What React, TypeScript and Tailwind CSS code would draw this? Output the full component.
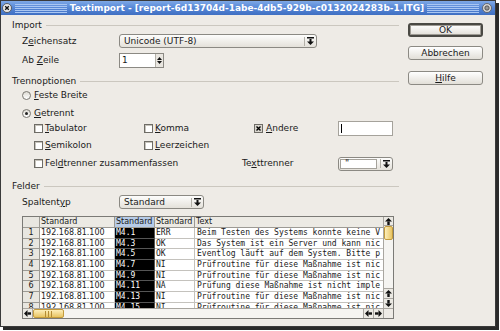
import React from 'react';

// Kleine Pfeil-Glyphen für Comboboxen und Scrollbalken
const ComboArrow: React.FC = () => (
  <svg width="7" height="8" viewBox="0 0 7 8">
    <rect x="0" y="0" width="7" height="1.5" fill="#111" />
    <rect x="2.5" y="2" width="2" height="3" fill="#111" />
    <polygon points="0,4.5 7,4.5 3.5,8" fill="#111" />
  </svg>
);

const Arrow: React.FC<{ dir: 'up' | 'down' | 'left' | 'right' }> = ({ dir }) => {
  const rot = { up: 0, down: 180, left: 270, right: 90 }[dir];
  return (
    <svg width="7" height="7" viewBox="0 0 7 7" style={{ transform: `rotate(${rot}deg)` }}>
      <polygon points="0,3.5 3.5,0 7,3.5" fill="#111" />
      <rect x="2.3" y="3.5" width="2.4" height="3.5" fill="#111" />
    </svg>
  );
};

const Combo: React.FC<{ w: string; text: string; entry?: boolean }> = ({ w, text, entry }) => (
  <div className={`${w} h-[14px] flex border border-[#8b8983] rounded-[3px] bg-gradient-to-b from-[#fdfdfc] to-[#e4e1da] overflow-hidden`}>
    <div className={`flex-1 flex items-center pl-[4px] ${entry ? 'bg-white m-[1px] border border-[#a5a29b]' : ''}`}>{text}</div>
    <div className="w-[14px] flex items-center justify-center">
      <div className="w-px h-[9px] bg-[#b3b0a8] mr-[2px]" />
      <ComboArrow />
    </div>
  </div>
);

const Check: React.FC<{ checked?: boolean }> = ({ checked }) => (
  <div className={`w-[9px] h-[9px] border border-[#6e6c66] flex items-center justify-center shrink-0 ${checked ? 'bg-[#d9d6cf]' : 'bg-white shadow-[inset_1px_1px_0_#c6c3bb]'}`}>
    {checked && (
      <svg width="5" height="5" viewBox="0 0 5 5">
        <path d="M0.5 0.5 L4.5 4.5 M4.5 0.5 L0.5 4.5" stroke="#000" strokeWidth="1.4" />
      </svg>
    )}
  </div>
);

const Radio: React.FC<{ checked?: boolean }> = ({ checked }) => (
  <div className="w-[9px] h-[9px] rounded-full border border-[#7a7872] bg-gradient-to-b from-[#dedbd4] to-white flex items-center justify-center shrink-0">
    {checked && <div className="w-[3px] h-[3px] rounded-full bg-[#222]" />}
  </div>
);

const Section: React.FC<{ title: string }> = ({ title }) => (
  <div className="h-[10px] flex items-center pl-[11px]">
    <span>{title}</span>
    <div className="flex-1 h-px bg-[#cbc7bf] ml-[4px]" />
  </div>
);

const Button: React.FC<{ children: React.ReactNode; def?: boolean }> = ({ children, def }) => (
  <div className={`w-[75px] h-[14px] rounded-[3px] flex items-center justify-center bg-gradient-to-b from-white to-[#e2dfd8] ${def ? 'border-2 border-[#4a4944] shadow-[inset_0_0_0_1px_#9e9b94]' : 'border border-[#8c8a84]'}`}>
    {children}
  </div>
);

// Sichtbarer Ausschnitt der Vorschau
const rows = [
  ['M4.1', 'ERR', 'Beim Testen des Systems konnte keine V'],
  ['M4.3', 'OK', 'Das System ist ein Server und kann nic'],
  ['M4.5', 'OK', 'Eventlog läuft auf dem System. Bitte p'],
  ['M4.7', 'NI', 'Prüfroutine für diese Maßnahme ist nic'],
  ['M4.9', 'NI', 'Prüfroutine für diese Maßnahme ist nic'],
  ['M4.11', 'NA', 'Prüfung diese Maßnahme ist nicht imple'],
  ['M4.13', 'NI', 'Prüfroutine für diese Maßnahme ist nic'],
  ['M4.15', 'NI', 'Prüfroutine für diese Maßnahme ist nic'],
];

const Thumb: React.FC<{ className: string; vertical?: boolean }> = ({ className, vertical }) => (
  <div className={`${className} border border-[#c39b3c] rounded-[2px] flex items-center justify-center gap-[2px] ${vertical ? 'bg-gradient-to-r' : 'bg-gradient-to-b'} from-[#fdeeb8] to-[#e8c460]`}>
    {!vertical && (
      <>
        <div className="w-px h-[6px] bg-[#b48c34]" />
        <div className="w-px h-[6px] bg-[#b48c34]" />
        <div className="w-px h-[6px] bg-[#b48c34]" />
      </>
    )}
  </div>
);

const Table: React.FC = () => (
  <div className="ml-[21px] mt-[7px] w-[372px] h-[103px] border border-[#7b7a76] flex flex-col bg-white">
    <div className="flex flex-1 min-h-0">
      <div className="flex-1 overflow-hidden text-[8px] leading-none">
        <div className="flex h-[11px] font-['DejaVu_Sans',sans-serif]">
          <div className="w-[17px] bg-[#e8e6e0] border-r border-b border-[#9c9a94]" />
          <div className="w-[75px] bg-[#eceae4] border-r border-b border-[#9c9a94] pl-[1px] flex items-center">Standard</div>
          <div className="w-[40px] bg-[#b6cbe7] border-r border-b border-[#9c9a94] pl-[1px] flex items-center overflow-hidden whitespace-nowrap">Standard</div>
          <div className="w-[40px] bg-[#eceae4] border-r border-b border-[#9c9a94] pl-[1px] flex items-center overflow-hidden whitespace-nowrap">Standard</div>
          <div className="flex-1 bg-[#eceae4] border-b border-[#9c9a94] pl-[1px] flex items-center">Text</div>
        </div>
        {rows.map((r, i) => (
          <div key={i} className="flex h-[10.7px]">
            <div className="w-[17px] bg-[#e8e6e0] border-r border-b border-[#9c9a94] flex items-center justify-center font-['DejaVu_Sans',sans-serif]">{i + 1}</div>
            <div className="w-[75px] border-r border-b border-[#c4c2bd] pl-[1px] flex items-center font-['DejaVu_Sans',sans-serif] whitespace-nowrap">192.168.81.100</div>
            <div className="w-[40px] bg-black text-white border-r border-b border-[#555] pl-[1px] flex items-center font-['DejaVu_Sans_Mono',monospace] whitespace-nowrap overflow-hidden">{r[0]}</div>
            <div className="w-[40px] border-r border-b border-[#c4c2bd] pl-[1px] flex items-center font-['DejaVu_Sans_Mono',monospace]">{r[1]}</div>
            <div className="flex-1 border-b border-[#c4c2bd] pl-[2px] flex items-center font-['DejaVu_Sans_Mono',monospace] whitespace-nowrap overflow-hidden">{r[2]}</div>
          </div>
        ))}
      </div>
      <div className="w-[10px] border-l border-[#a9a6a0] bg-[#f5f4f1] flex flex-col">
        <div className="h-[9px] flex items-center justify-center bg-[#ebe9e3] border-b border-[#a9a6a0]"><Arrow dir="up" /></div>
        <Thumb className="h-[14px]" vertical />
        <div className="flex-1" />
        <div className="h-[10px] flex items-center justify-center bg-[#ebe9e3] border-t border-[#a9a6a0]"><Arrow dir="up" /></div>
        <div className="h-[10px] flex items-center justify-center bg-[#ebe9e3] border-t border-[#a9a6a0]"><Arrow dir="down" /></div>
      </div>
    </div>
    <div className="h-[10px] flex border-t border-[#a9a6a0] bg-[#f5f4f1]">
      <div className="w-[10px] flex items-center justify-center bg-[#ebe9e3] border-r border-[#a9a6a0]"><Arrow dir="left" /></div>
      <Thumb className="w-[31px]" />
      <div className="flex-1" />
      <div className="w-[10px] flex items-center justify-center bg-[#ebe9e3] border-l border-[#a9a6a0]"><Arrow dir="left" /></div>
      <div className="w-[10px] flex items-center justify-center bg-[#ebe9e3] border-l border-[#a9a6a0]"><Arrow dir="right" /></div>
      <div className="w-[10px] bg-[#eeebe6] border-l border-[#a9a6a0]" />
    </div>
  </div>
);

const Stripes: React.FC = () => (
  <div className="flex-1 h-[9px] bg-[repeating-linear-gradient(to_bottom,#a9c6f2_0px,#a9c6f2_1px,transparent_1px,transparent_2px)]" />
);

const App: React.FC = () => {
  return (
    <div className="w-[500px] h-[331px] bg-white font-['DejaVu_Sans',sans-serif] text-[9px] text-[#1a1a1a] leading-none">
      <div className="w-[496px] h-[327px] border border-[#3a3a3a] shadow-[3px_3px_0_0_#2a2a2a] bg-[#eeebe6] flex flex-col">
        {/* Titelleiste */}
        <div className="h-[14px] flex items-center bg-gradient-to-b from-[#7ea8e6] via-[#5586d6] to-[#3f6fc2] pl-[1px] pr-[3px]">
          <svg width="10" height="10" viewBox="0 0 10 10">
            <circle cx="5" cy="5" r="4.5" fill="#e8e8e8" stroke="#444" strokeWidth="0.8" />
            <path d="M3.2 3.2 L6.8 6.8 M6.8 3.2 L3.2 6.8" stroke="#111" strokeWidth="1.3" />
          </svg>
          <div className="w-[3px]" />
          <Stripes />
          <span className="px-[3px] text-white font-bold text-[9px] whitespace-nowrap">
            Textimport - [report-6d13704d-1abe-4db5-929b-c0132024283b-1.ITG]
          </span>
          <Stripes />
          <div className="w-[3px]" />
          <svg width="10" height="10" viewBox="0 0 10 10">
            <circle cx="5" cy="5" r="4.5" fill="#d8d8d8" stroke="#555" strokeWidth="0.8" />
            <circle cx="5" cy="5" r="2.2" fill="#999" stroke="#333" strokeWidth="0.7" />
          </svg>
        </div>

        <div className="flex flex-1">
          {/* Linke Seite */}
          <div className="w-[398px] flex flex-col">
            <div className="mt-[5px]"><Section title="Import" /></div>
            <div className="mt-[4px] h-[14px] flex items-center pl-[21px]">
              <span className="w-[97px]">Z<u>e</u>ichensatz</span>
              <Combo w="w-[198px]" text="Unicode (UTF-8)" />
            </div>
            <div className="mt-[5px] h-[15px] flex items-center pl-[21px]">
              <span className="w-[97px]">Ab <u>Z</u>eile</span>
              <div className="w-[45px] h-[15px] flex border border-[#8b8983] bg-white">
                <div className="flex-1 flex items-center pl-[2px]">1</div>
                <div className="w-[8px] flex flex-col items-center justify-center bg-[#e9e6e0] border-l border-[#b3b0a8] gap-[1px]">
                  <svg width="5" height="3" viewBox="0 0 5 3"><polygon points="0,3 2.5,0 5,3" fill="#111" /></svg>
                  <svg width="5" height="3" viewBox="0 0 5 3"><polygon points="0,0 5,0 2.5,3" fill="#111" /></svg>
                </div>
              </div>
            </div>
            <div className="mt-[8px]"><Section title="Trennoptionen" /></div>
            <div className="mt-[4px] h-[10px] flex items-center pl-[21px] gap-[3px]">
              <Radio /><span><u>F</u>este Breite</span>
            </div>
            <div className="mt-[8px] h-[10px] flex items-center pl-[21px] gap-[3px]">
              <Radio checked /><span><u>G</u>etrennt</span>
            </div>
            <div className="mt-[3px] h-[15px] flex items-center pl-[33px]">
              <div className="w-[110px] flex items-center gap-[2px]"><Check /><span><u>T</u>abulator</span></div>
              <div className="w-[110px] flex items-center gap-[2px]"><Check /><span><u>K</u>omma</span></div>
              <div className="w-[84px] flex items-center gap-[3px]"><Check checked /><span><u>A</u>ndere</span></div>
              <div className="w-[55px] h-[15px] bg-white border border-[#a5a29b] flex items-center pl-[2px]">
                <div className="w-px h-[9px] bg-black" />
              </div>
            </div>
            <div className="mt-[4px] h-[10px] flex items-center pl-[33px]">
              <div className="w-[110px] flex items-center gap-[2px]"><Check /><span><u>S</u>emikolon</span></div>
              <div className="w-[110px] flex items-center gap-[2px]"><Check /><span><u>L</u>eerzeichen</span></div>
            </div>
            <div className="mt-[6px] h-[15px] flex items-center pl-[33px]">
              <div className="w-[208px] flex items-center gap-[2px]"><Check /><span>Fel<u>d</u>trenner zusammenfassen</span></div>
              <span className="w-[96px]">Te<u>x</u>ttrenner</span>
              <Combo w="w-[55px]" text={'"'} entry />
            </div>
            <div className="mt-[10px]"><Section title="Felder" /></div>
            <div className="mt-[4px] h-[14px] flex items-center pl-[21px]">
              <span className="w-[97px]">Spaltent<u>y</u>p</span>
              <Combo w="w-[85px]" text="Standard" />
            </div>
            <Table />
          </div>

          {/* Schaltflächen */}
          <div className="flex flex-col pl-[9px] pt-[8px]">
            <Button def>OK</Button>
            <div className="mt-[9px]"><Button>Abbrechen</Button></div>
            <div className="mt-[11px]"><Button><span><u>H</u>ilfe</span></Button></div>
          </div>
        </div>
      </div>
    </div>
  );
};

export default App;
